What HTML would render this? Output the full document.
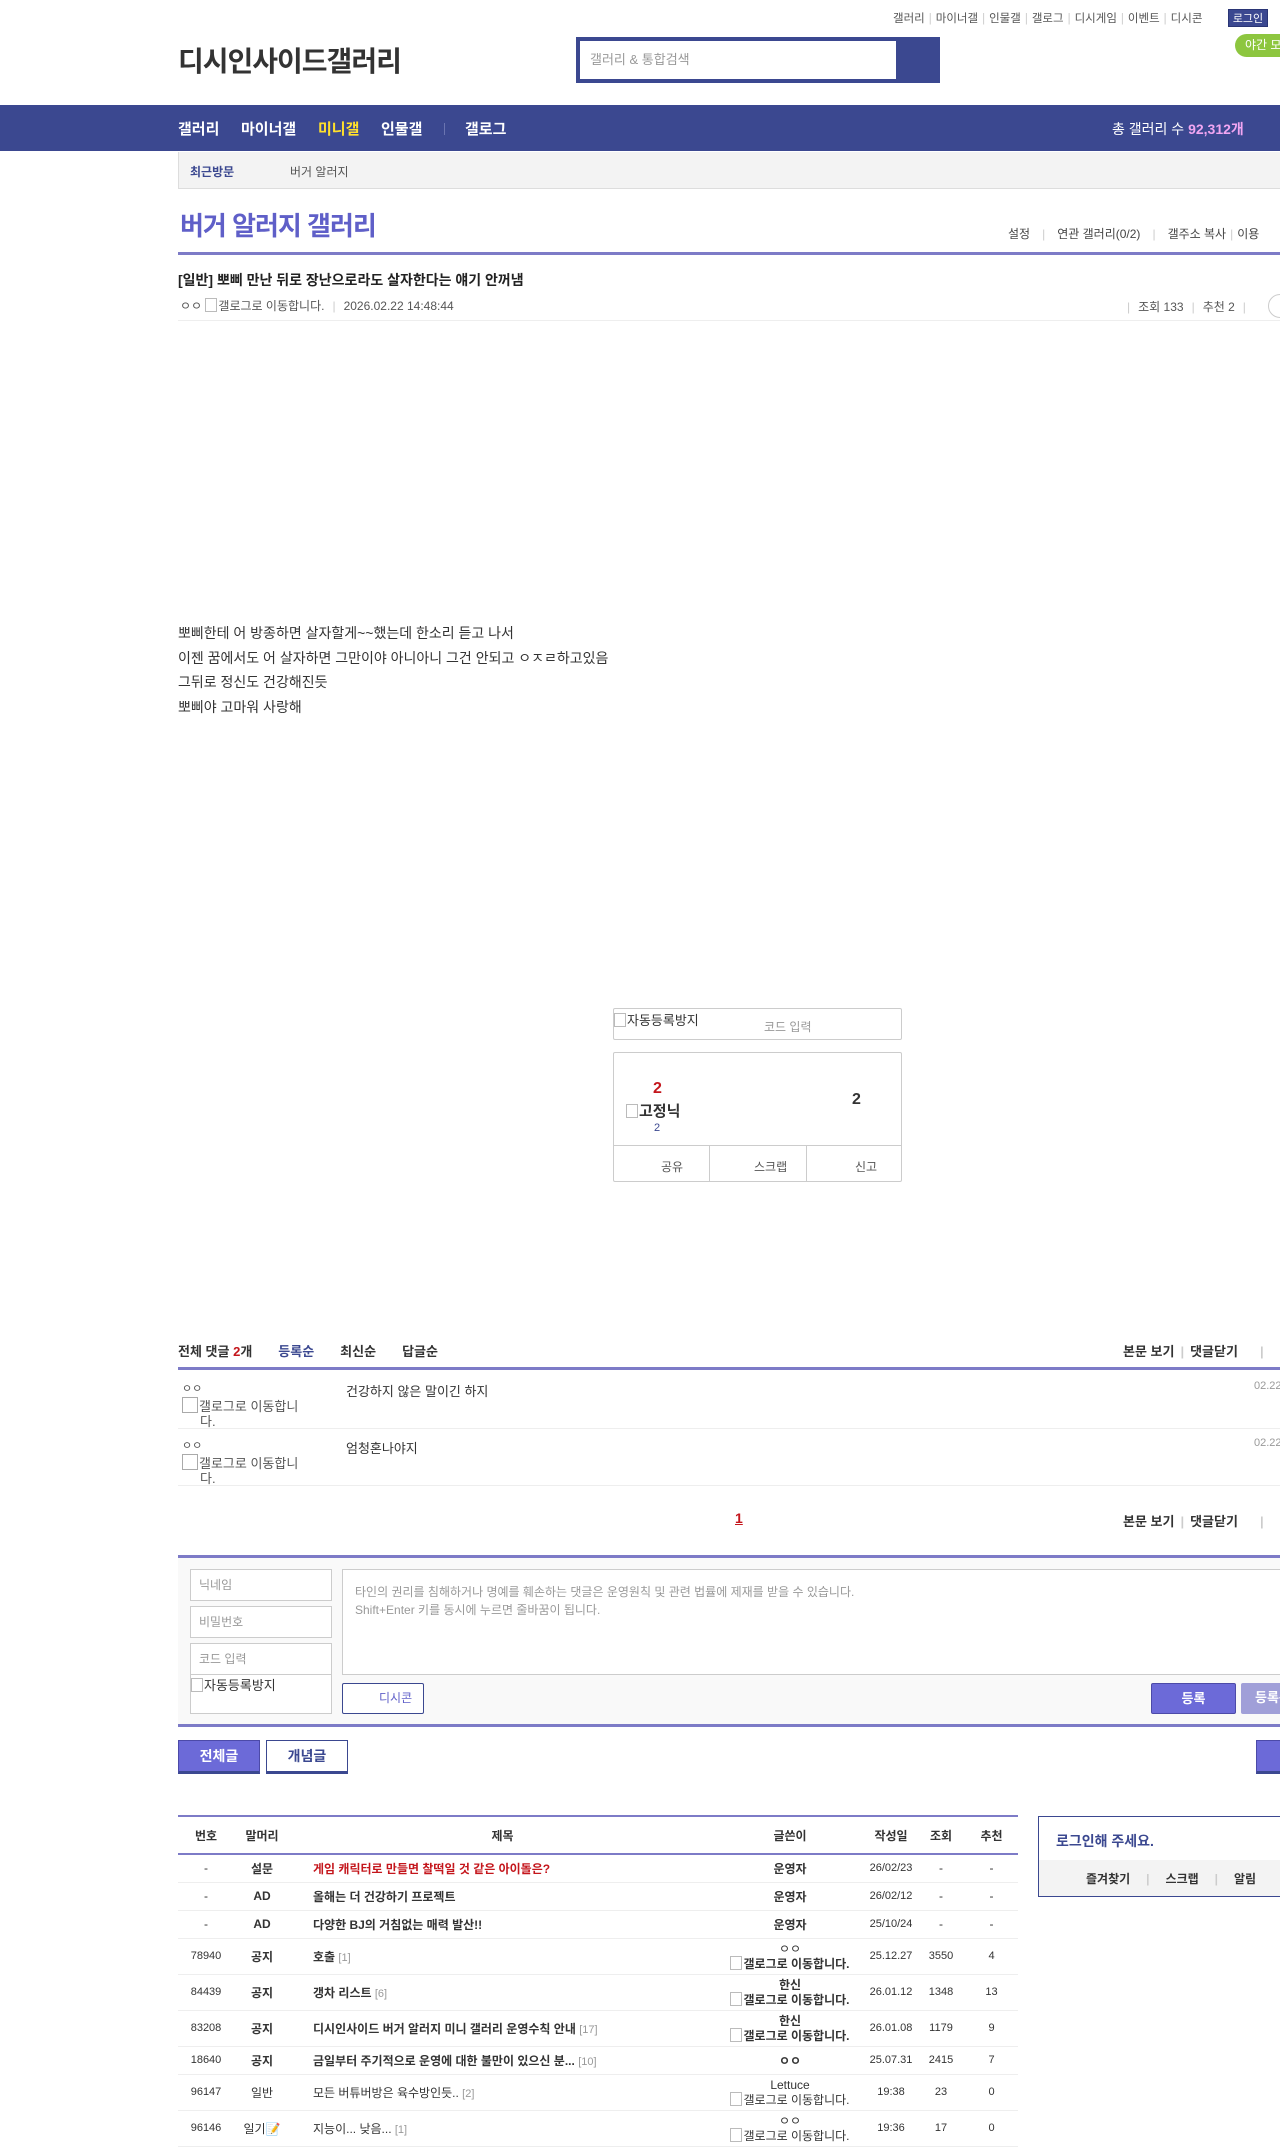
<!DOCTYPE html>
<html><head><meta charset="utf-8">
<style>
*{margin:0;padding:0;box-sizing:border-box}
html,body{width:1280px;height:2150px;overflow:hidden;background:#fff}
body{font-family:"Liberation Sans","Noto Sans CJK KR",sans-serif;color:#333;font-size:13px;position:relative}
.a{position:absolute;white-space:nowrap}
.nav a{color:#fff;font-weight:bold;font-size:15px}
.sep{color:#ccc;margin:0 4px}
table{border-collapse:collapse}
.lst td{height:28px;text-align:center;font-size:12px;border-bottom:1px solid #eee;color:#333}
.lst .t{text-align:left;padding-left:23px}
.b{font-weight:bold}
.gi{display:inline-block;width:12px;height:14px;border:1px solid #bbb;vertical-align:-2px;margin-right:1px}
</style></head><body>

<!-- top links -->
<div class="a" style="left:893px;top:10px;font-size:11.5px;color:#555">갤러리<span class="sep">|</span>마이너갤<span class="sep">|</span>인물갤<span class="sep">|</span>갤로그<span class="sep">|</span>디시게임<span class="sep">|</span>이벤트<span class="sep">|</span>디시콘</div>
<div class="a" style="left:1228px;top:9px;width:40px;height:18px;background:#3b4890;color:#fff;font-size:11px;text-align:center;line-height:18px;border:1px solid #2a3575">로그인</div>
<div class="a" style="left:1235px;top:34px;width:60px;height:23px;background:#8dc63f;border-radius:12px;color:#fff;font-size:12px;line-height:23px;padding-left:10px">야간 모드</div>

<!-- logo -->
<div class="a" style="left:178px;top:40px;font-size:28px;font-weight:bold;color:#333;letter-spacing:-1px">디시인사이드갤러리</div>

<!-- search -->
<div class="a" style="left:576px;top:37px;width:364px;height:46px;background:#3b4890"></div>
<div class="a" style="left:580px;top:41px;width:316px;height:38px;background:#fff;color:#999;font-size:13px;line-height:38px;padding-left:10px">갤러리 &amp; 통합검색</div>

<!-- nav -->
<div class="a" style="left:0;top:105px;width:1280px;height:46px;background:#3b4890"></div>
<div class="a nav" style="left:178px;top:118px"><a>갤러리</a></div>
<div class="a nav" style="left:241px;top:118px"><a>마이너갤</a></div>
<div class="a nav" style="left:318px;top:118px"><a style="color:#ffe02b">미니갤</a></div>
<div class="a nav" style="left:381px;top:118px"><a>인물갤</a></div>
<div class="a" style="left:444px;top:123px;width:1px;height:12px;background:#6a74b0"></div>
<div class="a nav" style="left:465px;top:118px"><a>갤로그</a></div>
<div class="a" style="left:1112px;top:119px;color:#fff;font-size:14px">총 갤러리 수 <b style="color:#f1a6f2">92,312개</b></div>

<!-- recent -->
<div class="a" style="left:178px;top:152px;width:1110px;height:37px;background:#f3f3f3;border-bottom:1px solid #ddd;border-left:1px solid #ddd"></div>
<div class="a" style="left:190px;top:163px;font-size:12px;font-weight:bold;color:#3b4890">최근방문</div>
<div class="a" style="left:290px;top:163px;font-size:12px;color:#555">버거 알러지</div>

<!-- title -->
<div class="a" style="left:180px;top:206px;font-size:26px;font-weight:bold;color:#5f5fc8;letter-spacing:-1px">버거 알러지 갤러리</div>
<div class="a" style="left:1008px;top:225px;font-size:12px;color:#444">설정<span class="sep" style="margin:0 12px">|</span>연관 갤러리(0/2)<span class="sep" style="margin:0 12px">|</span>갤주소 복사<span class="sep">|</span>이용</div>
<div class="a" style="left:178px;top:252px;width:1110px;height:3px;background:#7d7bc7"></div>

<!-- post head -->
<div class="a" style="left:178px;top:270px;font-size:14px;font-weight:bold;color:#222">[일반] 뽀삐 만난 뒤로 장난으로라도 살자한다는 얘기 안꺼냄</div>
<div class="a" style="left:180px;top:297px;font-size:12px;color:#555">ㅇㅇ <span class="gi"></span>갤로그로 이동합니다.<span class="sep" style="margin:0 8px">|</span>2026.02.22 14:48:44</div>
<div class="a" style="left:1127px;top:298px;font-size:12px;color:#555"><span class="sep" style="margin:0 8px 0 0">|</span>조회 133<span class="sep" style="margin:0 8px">|</span>추천 2<span class="sep" style="margin:0 8px">|</span></div>
<div class="a" style="left:1268px;top:294px;width:24px;height:24px;border:1px solid #ccc;border-radius:12px"></div>
<div class="a" style="left:178px;top:320px;width:1110px;height:1px;background:#eee"></div>

<!-- body -->
<div class="a" style="left:178px;top:621px;font-size:14px;line-height:24.5px;color:#333">뽀삐한테 어 방종하면 살자할게~~했는데 한소리 듣고 나서<br>이젠 꿈에서도 어 살자하면 그만이야 아니아니 그건 안되고 ㅇㅈㄹ하고있음<br>그뒤로 정신도 건강해진듯<br>뽀삐야 고마워 사랑해</div>

<!-- captcha -->
<div class="a" style="left:613px;top:1008px;width:289px;height:32px;border:1px solid #ccc;border-radius:2px"></div>
<div class="a" style="left:614px;top:1010px;font-size:13px;color:#333"><span class="gi"></span>자동등록방지</div>
<div class="a" style="left:764px;top:1018px;font-size:12px;color:#999">코드 입력</div>

<!-- recommend box -->
<div class="a" style="left:613px;top:1052px;width:289px;height:130px;border:1px solid #ccc;border-radius:2px"></div>
<div class="a" style="left:653px;top:1080px;font-size:16px;font-weight:bold;color:#c4161c">2</div>
<div class="a" style="left:626px;top:1100px;font-size:15px;font-weight:bold;color:#333"><span class="gi"></span>고정닉</div>
<div class="a" style="left:654px;top:1122px;font-size:11px;color:#3b4890">2</div>
<div class="a" style="left:852px;top:1091px;font-size:16px;font-weight:bold;color:#333">2</div>
<div class="a" style="left:613px;top:1145px;width:289px;height:1px;background:#ccc"></div>
<div class="a" style="left:709px;top:1145px;width:1px;height:37px;background:#ccc"></div>
<div class="a" style="left:806px;top:1145px;width:1px;height:37px;background:#ccc"></div>
<div class="a" style="left:661px;top:1158px;font-size:12px;color:#555">공유</div>
<div class="a" style="left:754px;top:1158px;font-size:12px;color:#555">스크랩</div>
<div class="a" style="left:855px;top:1158px;font-size:12px;color:#555">신고</div>

<!-- comments -->
<div class="a" style="left:178px;top:1341px;font-size:13px;font-weight:bold;color:#333">전체 댓글 <span style="color:#c4161c">2</span>개<span style="color:#3b4890;margin-left:26px">등록순</span><span style="margin-left:26px">최신순</span><span style="margin-left:26px">답글순</span></div>
<div class="a" style="left:1123px;top:1341px;font-size:13px;font-weight:bold;color:#333">본문 보기<span class="sep" style="margin:0 6px">|</span>댓글닫기<span class="sep" style="margin:0 0 0 22px">|</span></div>
<div class="a" style="left:178px;top:1367px;width:1110px;height:3px;background:#7d7bc7"></div>

<div class="a" style="left:182px;top:1380px;font-size:13px;color:#555;line-height:15px"><span style="font-size:11px">ㅇㅇ</span><br><span class="gi" style="width:16px;height:16px;border-color:#aaa"></span>갤로그로 이동합니<br>&nbsp;&nbsp;&nbsp;&nbsp;&nbsp;다.</div>
<div class="a" style="left:346px;top:1381px;font-size:13px;color:#333">건강하지 않은 말이긴 하지</div>
<div class="a" style="left:1254px;top:1380px;font-size:11px;color:#999">02.22</div>
<div class="a" style="left:178px;top:1428px;width:1110px;height:1px;background:#eee"></div>
<div class="a" style="left:182px;top:1437px;font-size:13px;color:#555;line-height:15px"><span style="font-size:11px">ㅇㅇ</span><br><span class="gi" style="width:16px;height:16px;border-color:#aaa"></span>갤로그로 이동합니<br>&nbsp;&nbsp;&nbsp;&nbsp;&nbsp;다.</div>
<div class="a" style="left:346px;top:1438px;font-size:13px;color:#333">엄청혼나야지</div>
<div class="a" style="left:1254px;top:1437px;font-size:11px;color:#999">02.22</div>
<div class="a" style="left:178px;top:1485px;width:1110px;height:1px;background:#eee"></div>

<div class="a" style="left:735px;top:1510px;font-size:14px;font-weight:bold;color:#c4161c;text-decoration:underline">1</div>
<div class="a" style="left:1123px;top:1511px;font-size:13px;font-weight:bold;color:#333">본문 보기<span class="sep" style="margin:0 6px">|</span>댓글닫기<span class="sep" style="margin:0 0 0 22px">|</span></div>

<!-- write form -->
<div class="a" style="left:178px;top:1555px;width:1110px;height:3px;background:#7d7bc7"></div>
<div class="a" style="left:178px;top:1558px;width:1110px;height:166px;background:#f9f9f9"></div>
<div class="a" style="left:190px;top:1569px;width:142px;height:32px;background:#fff;border:1px solid #ccc;color:#999;font-size:12px;line-height:30px;padding-left:8px">닉네임</div>
<div class="a" style="left:190px;top:1606px;width:142px;height:32px;background:#fff;border:1px solid #ccc;color:#999;font-size:12px;line-height:30px;padding-left:8px">비밀번호</div>
<div class="a" style="left:190px;top:1643px;width:142px;height:32px;background:#fff;border:1px solid #ccc;color:#999;font-size:12px;line-height:30px;padding-left:8px">코드 입력</div>
<div class="a" style="left:190px;top:1674px;width:142px;height:40px;background:#fff;border:1px solid #ccc;font-size:13px;color:#333"><span class="gi"></span>자동등록방지</div>
<div class="a" style="left:342px;top:1569px;width:950px;height:106px;background:#fff;border:1px solid #ccc;font-size:12px;color:#999;padding:13px 12px;line-height:18px">타인의 권리를 침해하거나 명예를 훼손하는 댓글은 운영원칙 및 관련 법률에 제재를 받을 수 있습니다.<br>Shift+Enter 키를 동시에 누르면 줄바꿈이 됩니다.</div>
<div class="a" style="left:342px;top:1683px;width:82px;height:31px;background:#fff;border:1px solid #3b4890;border-radius:2px;color:#5f5fc8;font-size:12px;line-height:29px;padding-left:36px">디시콘</div>
<div class="a" style="left:1151px;top:1683px;width:85px;height:31px;background:#6c6ad8;border:1px solid #4c4aa8;border-radius:2px;color:#fff;font-size:13px;font-weight:bold;line-height:29px;text-align:center">등록</div>
<div class="a" style="left:1241px;top:1683px;width:60px;height:31px;background:#a09fd8;border-radius:2px;color:#fff;font-size:13px;font-weight:bold;line-height:29px;padding-left:14px">등록+</div>
<div class="a" style="left:178px;top:1724px;width:1110px;height:3px;background:#7d7bc7"></div>

<!-- tabs -->
<div class="a" style="left:178px;top:1740px;width:82px;height:34px;background:#6c6ad8;border:1px solid #4c4aa8;border-bottom:3px solid #3b4890;color:#fff;font-size:14px;font-weight:bold;text-align:center;line-height:30px">전체글</div>
<div class="a" style="left:266px;top:1740px;width:82px;height:34px;background:#fff;border:1px solid #3b4890;border-bottom:3px solid #3b4890;color:#3b4890;font-size:14px;font-weight:bold;text-align:center;line-height:30px">개념글</div>
<div class="a" style="left:1256px;top:1740px;width:60px;height:34px;background:#6c6ad8;border:1px solid #4c4aa8;border-bottom:3px solid #3b4890"></div>

<!-- list -->
<div class="a" style="left:178px;top:1815px;width:840px;height:2px;background:#7d7bc7"></div>
<table class="a lst" style="left:178px;top:1817px;width:840px;table-layout:fixed">
<colgroup><col style="width:56px"><col style="width:56px"><col style="width:425px"><col style="width:150px"><col style="width:52px"><col style="width:48px"><col style="width:53px"></colgroup>
<tr><td class="b" style="height:37px;border-bottom:2px solid #7d7bc7">번호</td><td class="b" style="border-bottom:2px solid #7d7bc7">말머리</td><td class="b" style="border-bottom:2px solid #7d7bc7">제목</td><td class="b" style="border-bottom:2px solid #7d7bc7">글쓴이</td><td class="b" style="border-bottom:2px solid #7d7bc7">작성일</td><td class="b" style="border-bottom:2px solid #7d7bc7">조회</td><td class="b" style="border-bottom:2px solid #7d7bc7">추천</td></tr>
<tr><td>-</td><td class="b">설문</td><td class="t b" style="color:#c4161c">게임 캐릭터로 만들면 찰떡일 것 같은 아이돌은?</td><td class="b">운영자</td><td style="font-size:11px">26/02/23</td><td>-</td><td>-</td></tr>
<tr><td>-</td><td class="b">AD</td><td class="t b">올해는 더 건강하기 프로젝트</td><td class="b">운영자</td><td style="font-size:11px">26/02/12</td><td>-</td><td>-</td></tr>
<tr><td>-</td><td class="b">AD</td><td class="t b">다양한 BJ의 거침없는 매력 발산!!</td><td class="b">운영자</td><td style="font-size:11px">25/10/24</td><td>-</td><td>-</td></tr>
<tr><td style="height:36px;font-size:11px">78940</td><td class="b">공지</td><td class="t b">호출 <span style="color:#999;font-weight:normal;font-size:11px">[1]</span></td><td style="line-height:14px;white-space:nowrap">ㅇㅇ<br><span class="gi"></span><b>갤로그로 이동합니다.</b></td><td style="font-size:11px">25.12.27</td><td style="font-size:11px">3550</td><td style="font-size:11px">4</td></tr>
<tr><td style="height:36px;font-size:11px">84439</td><td class="b">공지</td><td class="t b">갱차 리스트 <span style="color:#999;font-weight:normal;font-size:11px">[6]</span></td><td style="line-height:14px;white-space:nowrap"><b>한신</b><br><span class="gi"></span><b>갤로그로 이동합니다.</b></td><td style="font-size:11px">26.01.12</td><td style="font-size:11px">1348</td><td style="font-size:11px">13</td></tr>
<tr><td style="height:36px;font-size:11px">83208</td><td class="b">공지</td><td class="t b">디시인사이드 버거 알러지 미니 갤러리 운영수칙 안내 <span style="color:#999;font-weight:normal;font-size:11px">[17]</span></td><td style="line-height:14px;white-space:nowrap"><b>한신</b><br><span class="gi"></span><b>갤로그로 이동합니다.</b></td><td style="font-size:11px">26.01.08</td><td style="font-size:11px">1179</td><td style="font-size:11px">9</td></tr>
<tr><td style="font-size:11px">18640</td><td class="b">공지</td><td class="t b" style="white-space:nowrap">금일부터 주기적으로 운영에 대한 불만이 있으신 분... <span style="color:#999;font-weight:normal;font-size:11px">[10]</span></td><td class="b">ㅇㅇ</td><td style="font-size:11px">25.07.31</td><td style="font-size:11px">2415</td><td style="font-size:11px">7</td></tr>
<tr><td style="height:36px;font-size:11px">96147</td><td>일반</td><td class="t">모든 버튜버방은 육수방인듯.. <span style="color:#999;font-size:11px">[2]</span></td><td style="line-height:14px;white-space:nowrap">Lettuce<br><span class="gi"></span>갤로그로 이동합니다.</td><td style="font-size:11px">19:38</td><td style="font-size:11px">23</td><td style="font-size:11px">0</td></tr>
<tr><td style="height:36px;font-size:11px">96146</td><td>일기📝</td><td class="t">지능이... 낮음... <span style="color:#999;font-size:11px">[1]</span></td><td style="line-height:14px;white-space:nowrap">ㅇㅇ<br><span class="gi"></span>갤로그로 이동합니다.</td><td style="font-size:11px">19:36</td><td style="font-size:11px">17</td><td style="font-size:11px">0</td></tr>
</table>

<!-- login box -->
<div class="a" style="left:1038px;top:1816px;width:260px;height:81px;border:1px solid #3b4890;border-bottom-width:2px"></div>
<div class="a" style="left:1039px;top:1860px;width:260px;height:36px;background:#f3f3f3"></div>
<div class="a" style="left:1056px;top:1831px;font-size:14px;font-weight:bold;color:#3b4890">로그인해 주세요.</div>
<div class="a" style="left:1086px;top:1870px;font-size:12px;font-weight:bold;color:#333">즐겨찾기<span class="sep" style="margin:0 16px">|</span>스크랩<span class="sep" style="margin:0 16px">|</span>알림</div>

</body></html>
